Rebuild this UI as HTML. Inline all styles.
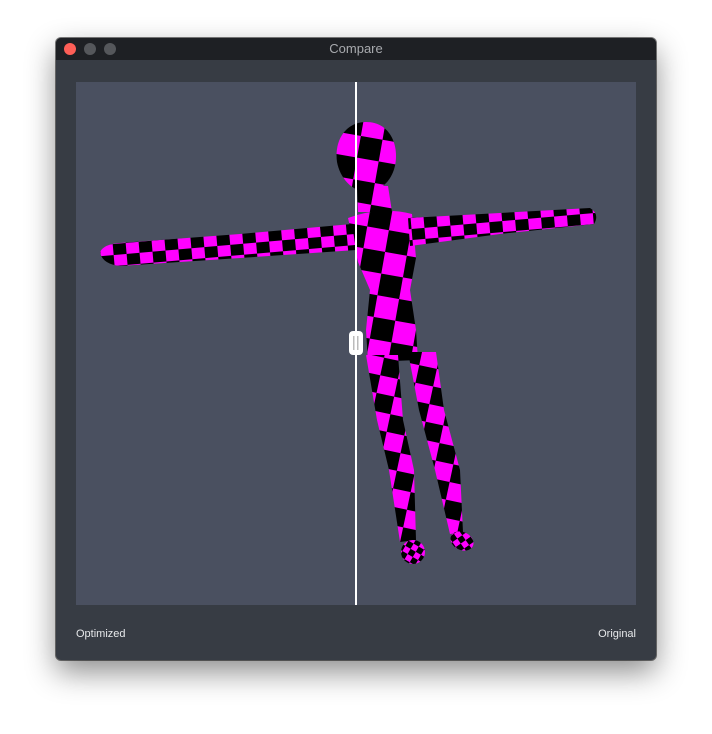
<!DOCTYPE html>
<html><head><style>
html,body{margin:0;padding:0;width:712px;height:734px;background:#fff;overflow:hidden;font-family:"Liberation Sans",sans-serif}
.win{position:absolute;left:56px;top:38px;width:600px;height:622px;background:#373c44;border-radius:5px;box-shadow:0 12px 30px rgba(0,0,0,.45),0 0 0 1px rgba(0,0,0,.5);overflow:hidden}
.tb{position:absolute;left:0;top:0;width:600px;height:22px;background:#1e2024;color:#a8aaae;font-size:13px;text-align:center;line-height:22px}
.d{position:absolute;top:5px;width:12px;height:12px;border-radius:50%;background:#55575b}
.lbl{position:absolute;top:590px;color:#e6e8ea;font-size:11px}
</style></head><body>
<div class="win">
<div class="tb">Compare</div>
<div class="d" style="left:8px;background:#fe5f57"></div>
<div class="d" style="left:28px"></div>
<div class="d" style="left:48px"></div>
<div class="lbl" style="left:20px">Optimized</div>
<div class="lbl" style="right:20px">Original</div>
</div>
<svg style="position:absolute;left:76px;top:82px" width="560" height="523" viewBox="76 82 560 523">
<defs>
<pattern id="c" width="44" height="44" patternUnits="userSpaceOnUse" patternTransform="translate(4,6) rotate(10)">
<rect width="44" height="44" fill="#ff00ff"/><rect width="22" height="22" fill="#000"/><rect x="22" y="22" width="22" height="22" fill="#000"/>
</pattern>
<pattern id="l" width="36" height="36" patternUnits="userSpaceOnUse" patternTransform="rotate(12)">
<rect width="36" height="36" fill="#ff00ff"/><rect width="18" height="18" fill="#000"/><rect x="18" y="18" width="18" height="18" fill="#000"/>
</pattern>
<pattern id="s" width="26" height="22" patternUnits="userSpaceOnUse" patternTransform="rotate(-5)">
<rect width="26" height="22" fill="#ff00ff"/><rect width="13" height="11" fill="#000"/><rect x="13" y="11" width="13" height="11" fill="#000"/>
</pattern>
<pattern id="f" width="12" height="12" patternUnits="userSpaceOnUse" patternTransform="rotate(30)">
<rect width="12" height="12" fill="#ff00ff"/><rect width="6" height="6" fill="#000"/><rect x="6" y="6" width="6" height="6" fill="#000"/>
</pattern>
</defs>
<rect x="76" y="82" width="560" height="523" fill="#4a5060"/>
<g>
<path d="M366 122 C386 122 396 138 396 156 C396 175 385 190 368 192 C352 192 340 178 337 162 C334 140 346 122 366 122Z" fill="url(#c)"/>
<path d="M357 186 L388 186 L392 212 L358 212Z" fill="url(#c)"/>
<path d="M348 218 Q380 206 412 214 L416 258 L410 290 L416 330 L418 360 L368 362 L366 330 L370 290 L358 262Z" fill="url(#c)"/>
<path d="M100 252 Q104 244 120 243 L240 234 L352 224 L356 250 L240 258 L120 266 Q102 264 100 252Z" fill="url(#s)"/>
<path d="M408 218 L500 213 L590 208 Q600 214 594 224 L500 234 L410 246Z" fill="url(#s)"/>
<path d="M366 355 L398 355 L403 420 L414 470 L416 540 L400 542 L389 470 L377 420Z" fill="url(#l)"/>
<path d="M408 352 L436 352 L444 410 L460 470 L463 532 L450 534 L435 470 L419 410Z" fill="url(#l)"/>
<ellipse cx="413" cy="552" rx="12" ry="12" fill="url(#f)"/>
<ellipse cx="462" cy="541" rx="12" ry="9" transform="rotate(25 462 541)" fill="url(#f)"/>
</g>
<rect x="355" y="82" width="2" height="523" fill="#fff"/>
<rect x="349" y="331" width="14" height="24" rx="4" fill="#fff"/>
<rect x="353" y="336" width="1.5" height="14" fill="#bbb"/><rect x="357" y="336" width="1.5" height="14" fill="#bbb"/>
</svg>
</body></html>
